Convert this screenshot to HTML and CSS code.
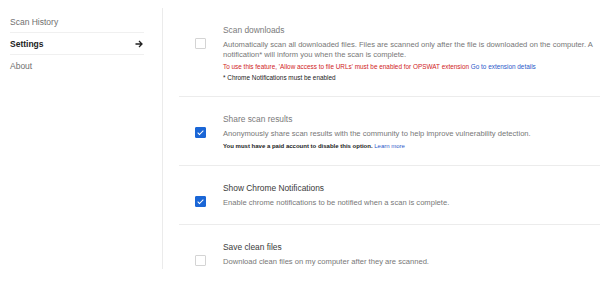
FILE: index.html
```html
<!DOCTYPE html>
<html lang="en">
<head>
  <meta charset="UTF-8" />
  <title>Settings - OPSWAT</title>
  <link rel="stylesheet" href="styles.css">
</head>
<body>
  <div id="page">
    <nav id="side-menu">
      <a class="menu-item" href="#">Scan History</a>
      <a class="menu-item active" href="#">Settings
        <svg class="arrow" width="8" height="8" viewBox="0 0 8 8">
          <path d="M0.5 4H7M4 1L7 4L4 7" fill="none" stroke="#222" stroke-width="1.3"/>
        </svg>
      </a>
      <a class="menu-item" href="#">About</a>
    </nav>

    <main id="settings">
      <div class="setting-row">
        <span class="check"></span>
        <div class="setting-text">
          <div class="setting-title muted">Scan downloads</div>
          <p class="setting-desc">Automatically scan all downloaded files. Files are scanned only after the file is downloaded on the computer. A notification* will inform you when the scan is complete.</p>
          <p class="setting-warn">To use this feature, 'Allow access to file URLs' must be enabled for OPSWAT extension <a href="#">Go to extension details</a></p>
          <p class="setting-note">* Chrome Notifications must be enabled</p>
        </div>
      </div>

      <div class="setting-row">
        <span class="check checked"></span>
        <div class="setting-text">
          <div class="setting-title muted">Share scan results</div>
          <p class="setting-desc">Anonymously share scan results with the community to help improve vulnerability detection.</p>
          <p class="setting-note strong">You must have a paid account to disable this option. <a href="#">Learn more</a></p>
        </div>
      </div>

      <div class="setting-row roomy">
        <span class="check checked"></span>
        <div class="setting-text">
          <div class="setting-title">Show Chrome Notifications</div>
          <p class="setting-desc">Enable chrome notifications to be notified when a scan is complete.</p>
        </div>
      </div>

      <div class="setting-row">
        <span class="check"></span>
        <div class="setting-text">
          <div class="setting-title">Save clean files</div>
          <p class="setting-desc">Download clean files on my computer after they are scanned.</p>
        </div>
      </div>
    </main>
  </div>
</body>
</html>
```

FILE: styles.css
```css
body {
  margin: 8px 0 0;
  font-family: 'Liberation Sans', Arial, sans-serif;
  background: #fff;
  color: #333;
}

#page {
  display: flex;
  height: 261px;
  overflow: hidden;
}

#side-menu {
  width: 134px;
  padding: 3px 18px 0 10px;
  border-right: 1px solid #ebebeb;
  flex-shrink: 0;
}

.menu-item {
  display: flex;
  justify-content: space-between;
  align-items: center;
  height: 21px;
  border-bottom: 1px solid #f0f0f0;
  font-size: 8.5px;
  color: #6f6f6f;
  text-decoration: none;
}

.menu-item:last-child {
  border-bottom: none;
}

.menu-item.active {
  color: #222;
  font-weight: bold;
}

.arrow {
  margin-right: 1px;
}

#settings {
  flex: 1;
  padding-left: 16px;
}

.setting-row {
  display: flex;
  gap: 17px;
  padding: 16px 0 13px 16px;
  border-bottom: 1px solid #ececec;
}

.setting-row.roomy {
  padding-bottom: 16px;
}

.check {
  flex-shrink: 0;
  width: 9px;
  height: 9px;
  margin-top: 14px;
  border: 1px solid #d4d4d4;
  border-radius: 1px;
  background: #fff;
}

.check.checked {
  position: relative;
  background: #1a66d6;
  border-color: #1a66d6;
}

.check.checked::after {
  content: '';
  position: absolute;
  left: 3px;
  top: 1px;
  width: 2px;
  height: 5px;
  border: solid #fff;
  border-width: 0 1.5px 1.5px 0;
  transform: rotate(45deg);
}

.setting-text {
  flex: 1;
}

.setting-title {
  font-size: 8.4px;
  line-height: 12px;
  color: #3a3a3a;
  margin-bottom: 4px;
}

.setting-title.muted {
  color: #7a7a7a;
}

.setting-desc {
  margin: 0;
  font-size: 7.6px;
  line-height: 10px;
  color: #777;
}

.setting-warn {
  margin: 1px 0 0;
  font-size: 6.4px;
  line-height: 11px;
  color: #d01c24;
}

.setting-note {
  margin: 1px 0 0;
  font-size: 6.4px;
  line-height: 10px;
  color: #222;
}

.setting-note.strong {
  font-size: 6px;
  font-weight: bold;
  line-height: 11px;
  margin-top: 2px;
}

.setting-warn a,
.setting-note a {
  color: #2b58c9;
  font-weight: normal;
  text-decoration: none;
}
```
